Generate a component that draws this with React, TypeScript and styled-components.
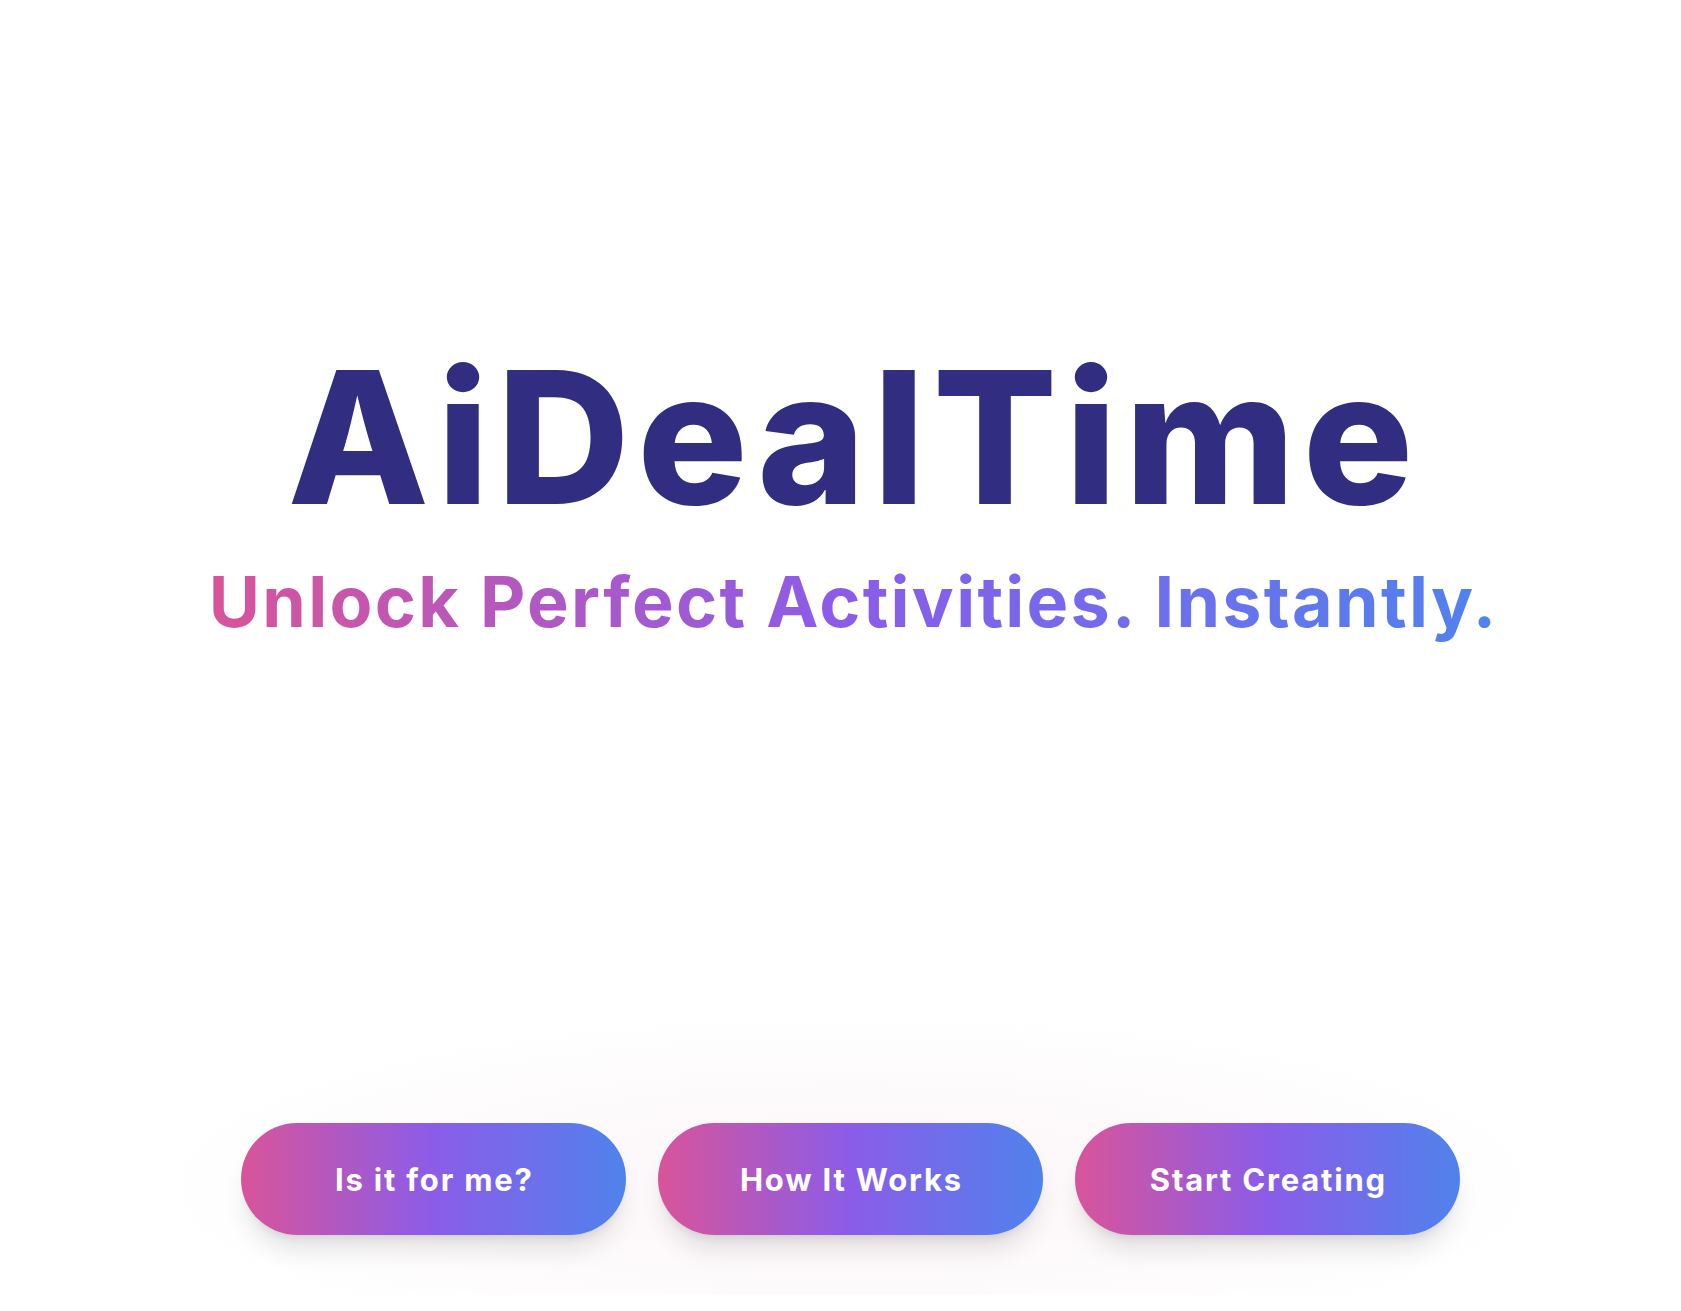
import React from "react";
import styled, { createGlobalStyle } from "styled-components";

const GlobalStyle = createGlobalStyle`
  html, body {
    margin: 0;
    padding: 0;
    background: #ffffff;
  }
  body {
    font-family: "Inter", "Liberation Sans", sans-serif;
  }
  * { box-sizing: border-box; }
`;

const Page = styled.main`
  min-height: 1311px;
  display: flex;
  flex-direction: column;
  align-items: center;
  padding: 345px 0 0 20px;
  background: #ffffff;
  overflow: hidden;
`;

const Hero = styled.header`
  display: flex;
  flex-direction: column;
  align-items: center;
`;

const Title = styled.h1`
  margin: 0 -7.6px 0 0;
  font-family: "Inter", "Liberation Sans", sans-serif;
  font-weight: 800;
  font-size: 184px;
  line-height: 184px;
  letter-spacing: 7.6px;
  color: #312e81;
  white-space: nowrap;
`;

const Tagline = styled.p`
  margin: 33px -2.3px 0 4px;
  font-family: "Inter", "Liberation Sans", sans-serif;
  font-weight: 700;
  font-size: 70px;
  line-height: 80px;
  letter-spacing: 2.3px;
  white-space: nowrap;
  background: linear-gradient(90deg, #d8549a 0%, #8a5cea 50%, #4f83ee 100%);
  -webkit-background-clip: text;
  background-clip: text;
  color: transparent;
`;

const ButtonArea = styled.section`
  margin-top: 381px;
  padding: 100px 60px 60px;
  background: radial-gradient(ellipse at 50% 60%, rgba(245, 225, 235, 0.35) 0%, rgba(250, 240, 245, 0.18) 55%, rgba(255, 255, 255, 0) 75%);
`;

const ButtonRow = styled.nav`
  display: flex;
  gap: 32px;
`;

const PillButton = styled.button`
  width: 385px;
  height: 112px;
  padding: 0 0 0 1.8px;
  border: none;
  border-radius: 999px;
  cursor: pointer;
  background: linear-gradient(90deg, #d8549a 0%, #8b5ce8 50%, #5082ec 100%);
  color: #ffffff;
  font-family: "Inter", "Liberation Sans", sans-serif;
  font-weight: 700;
  font-size: 31px;
  letter-spacing: 1.8px;
  box-shadow: 0 20px 25px -5px rgba(0, 0, 0, 0.1), 0 8px 10px -6px rgba(0, 0, 0, 0.1);
`;

const labels = ["Is it for me?", "How It Works", "Start Creating"];

export default function App() {
  return (
    <>
      <GlobalStyle />
      <Page>
        <Hero>
          <Title>AiDealTime</Title>
          <Tagline>Unlock Perfect Activities. Instantly.</Tagline>
        </Hero>
        <ButtonArea>
          <ButtonRow>
            {labels.map((l) => (
              <PillButton key={l}>{l}</PillButton>
            ))}
          </ButtonRow>
        </ButtonArea>
      </Page>
    </>
  );
}
